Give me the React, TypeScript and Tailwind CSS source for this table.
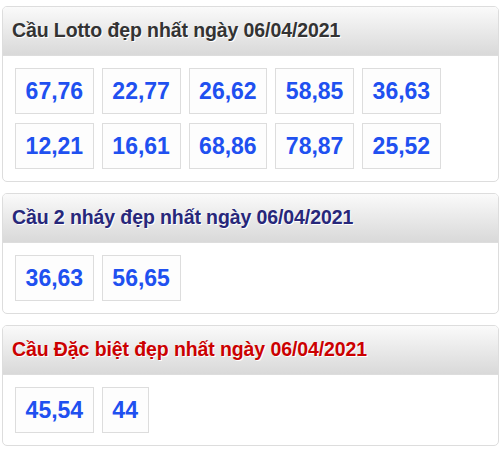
const sections = [
  {
    title: 'Cầu Lotto đẹp nhất ngày 06/04/2021',
    color: 'text-[#333333]',
    numbers: ['67,76', '22,77', '26,62', '58,85', '36,63', '12,21', '16,61', '68,86', '78,87', '25,52'],
  },
  {
    title: 'Cầu 2 nháy đẹp nhất ngày 06/04/2021',
    color: 'text-[#27277a]',
    numbers: ['36,63', '56,65'],
  },
  {
    title: 'Cầu Đặc biệt đẹp nhất ngày 06/04/2021',
    color: 'text-[#cc0000]',
    numbers: ['45,54', '44'],
  },
];

export default function App() {
  return (
    <div className="w-[503px] h-[449px] bg-white pt-[6px] px-[2px] font-['Liberation_Sans',Arial,sans-serif]">
      <div className="flex w-[497px] flex-col gap-[11px]">
        {sections.map((s) => (
          <div key={s.title} className="overflow-hidden rounded-[5px] border border-[#dddddd] bg-white">
            <div className="h-[49px] border-b border-[#dddddd] bg-gradient-to-b from-[#fafafa] to-[#d9d9d9] pl-[9px] flex items-center">
              <h2 className={`text-[19.5px] font-bold tracking-[-0.1px] ${s.color} [text-shadow:1px_1px_0_#ffffff]`}>{s.title}</h2>
            </div>
            <div className="flex flex-wrap gap-x-[8px] gap-y-[9px] pt-[12px] pb-[12px] pl-[12px] pr-[10px]">
              {s.numbers.map((n, i) => (
                <div
                  key={i}
                  className="min-w-[46px] h-[46px] border border-[#dddddd] bg-[#fdfdfd] px-[9.6px] flex items-center justify-center text-[23px] font-bold text-[#2050f0]"
                >
                  {n}
                </div>
              ))}
            </div>
          </div>
        ))}
      </div>
    </div>
  );
}
